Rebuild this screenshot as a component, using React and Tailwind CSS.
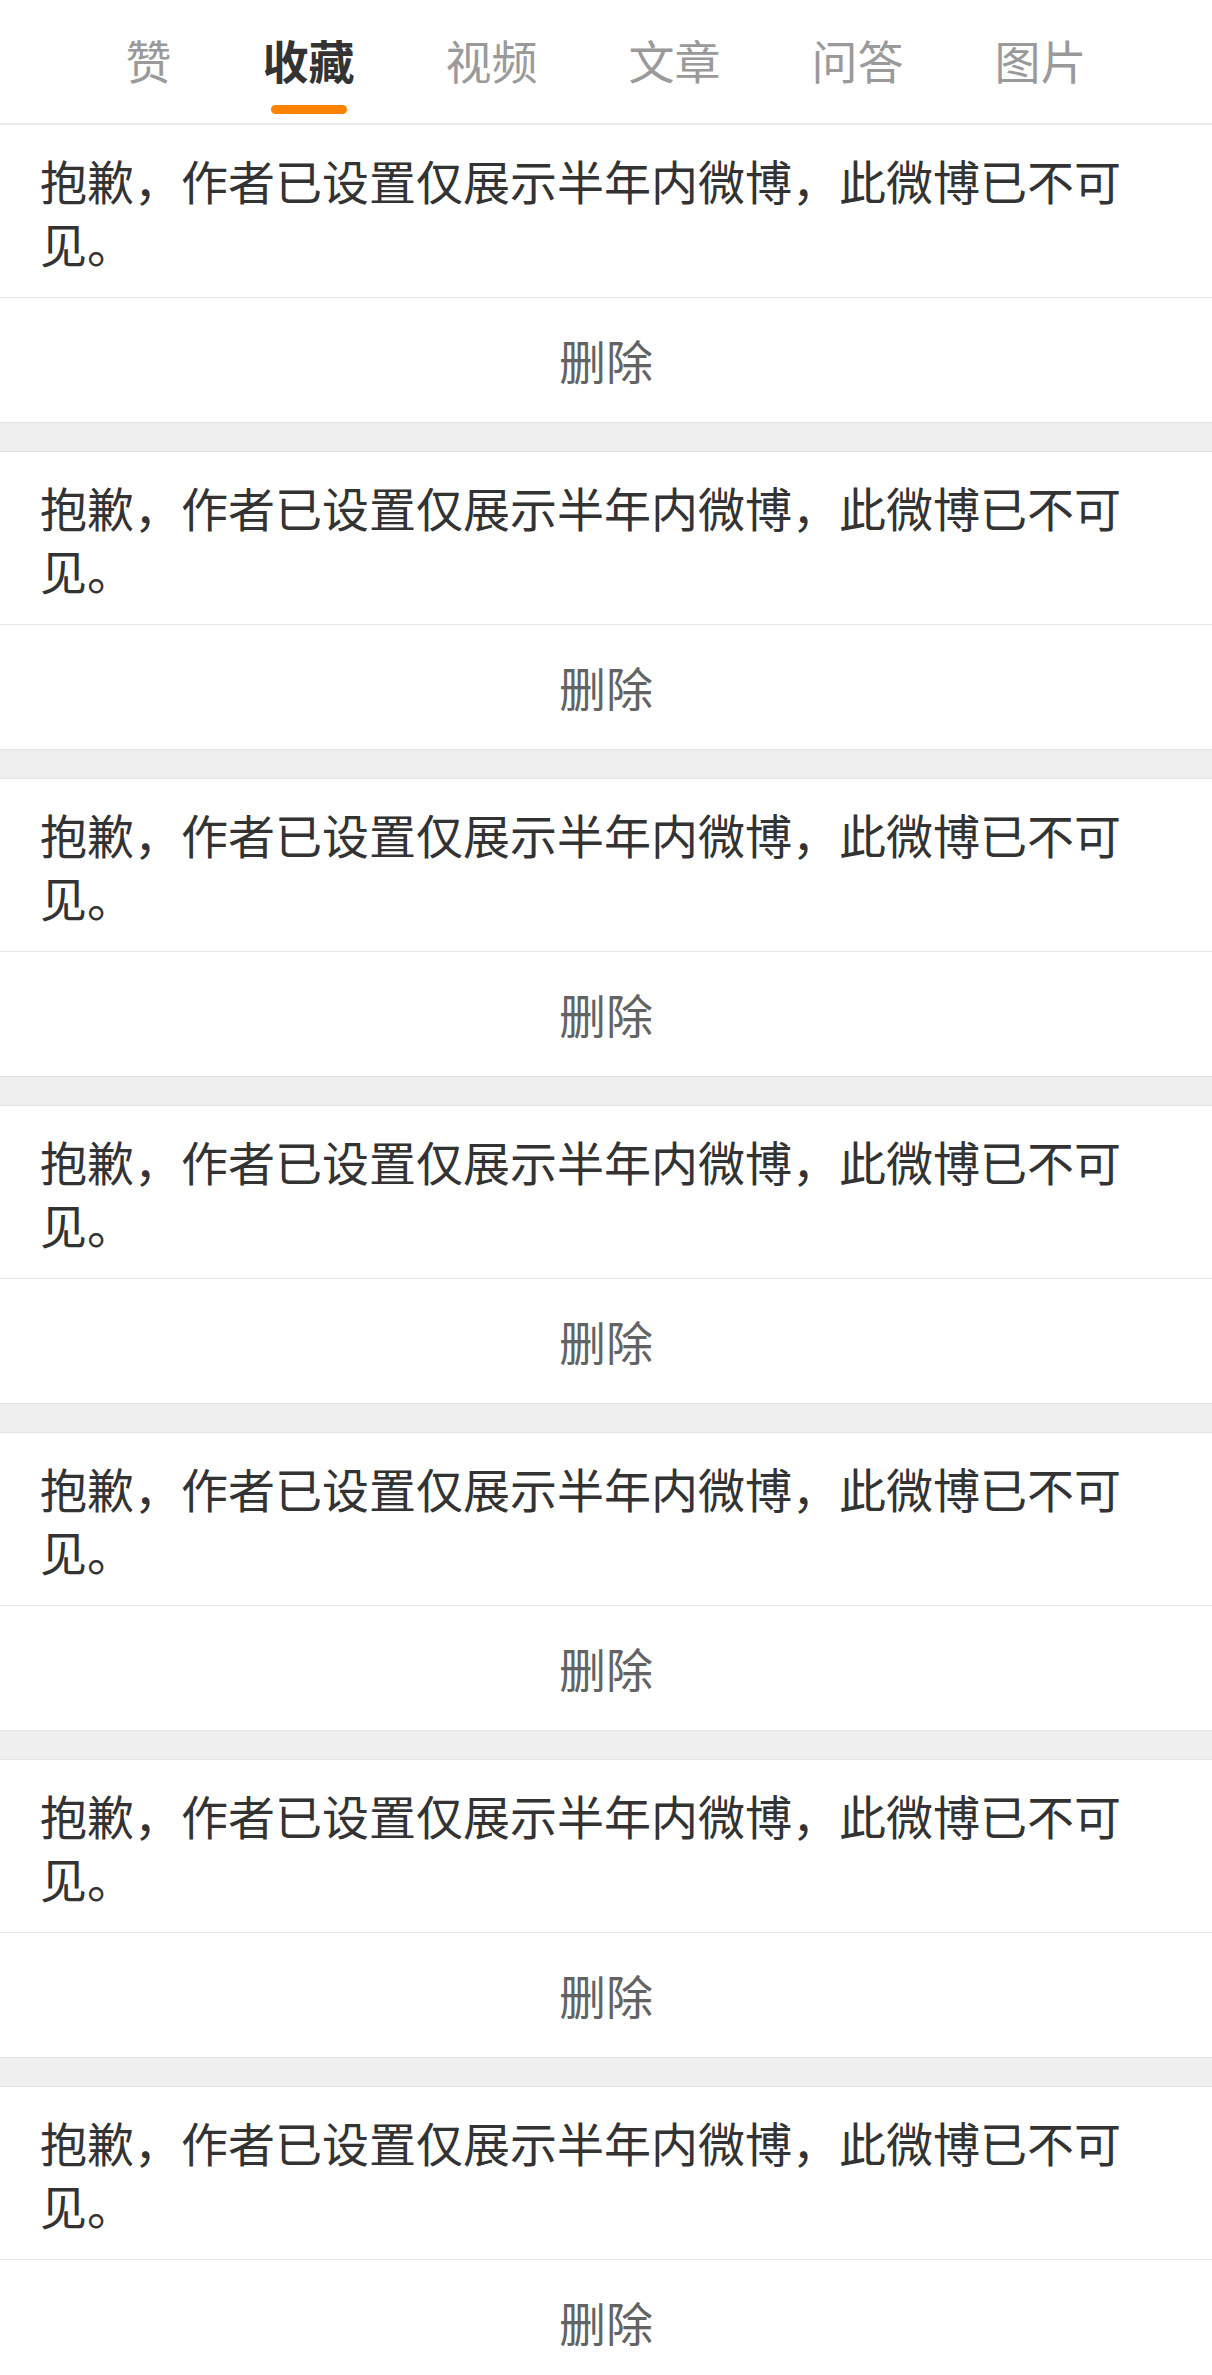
import React from "react";

const tabs = ["赞", "收藏", "视频", "文章", "问答", "图片"];
const font = { fontFamily: '"Noto Sans CJK SC", "Noto Sans", sans-serif' };

function Card() {
  return (
    <div className="bg-white">
      <div className="pl-[40px] pr-[60px] py-[23px] text-[47px] leading-[63px] text-[#333333]">
        抱歉，作者已设置仅展示半年内微博，此微博已不可见。
      </div>
      <div className="border-t border-[#e6e6e6] h-[125px] flex items-center justify-center text-[47px] text-[#636363]">
        删除
      </div>
    </div>
  );
}

export default function App() {
  return (
    <div className="w-[1212px] min-h-[2375px] bg-white" style={font}>
      <div className="h-[125px] border-b-2 border-[#e8e8e8] flex justify-center gap-[91px] pt-[36px] bg-white">
        {tabs.map((t, i) => (
          <div key={t} className="relative h-[46px]">
            <div
              className={
                "text-[46px] leading-[46px] " +
                (i === 1 ? "font-bold text-[#333333]" : "text-[#9a9a9a]")
              }
            >
              {t}
            </div>
            {i === 1 && (
              <div className="absolute left-1/2 top-[69px] -translate-x-1/2 h-[9px] w-[76px] rounded-full bg-[#ff8200]" />
            )}
          </div>
        ))}
      </div>
      {Array.from({ length: 7 }).map((_, i) => (
        <div key={i}>
          {i > 0 && (
            <div className="h-[30px] bg-[#efefef] border-t border-b border-[#e4e4e4]" />
          )}
          <Card />
        </div>
      ))}
    </div>
  );
}
